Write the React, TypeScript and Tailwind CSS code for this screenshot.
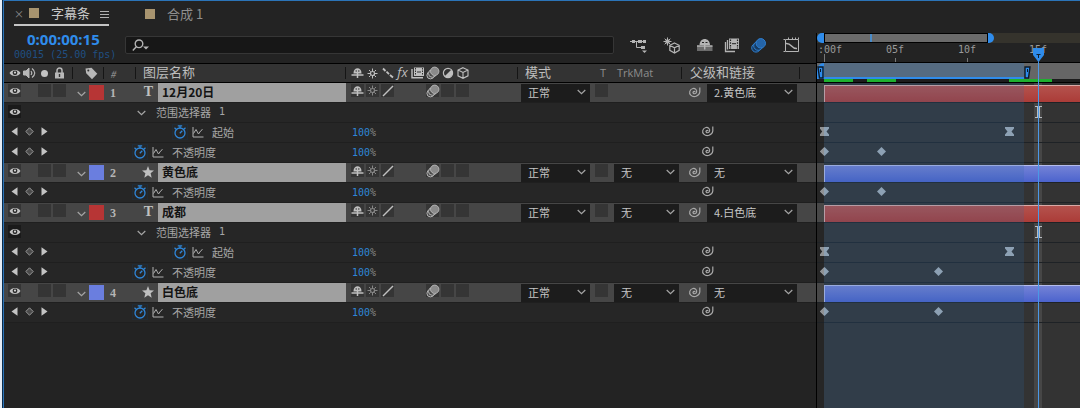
import { Fragment, type ReactNode } from 'react'

type Layer = {
  id: number
  name: string
  kind: 'text' | 'shape'
  matte: boolean
  parent: string
  selectorEnd?: number
  opacityEnd: number
}

const FRAME = 14.25
const WORK_END = 14
const PLAYHEAD = 15

const layers: Layer[] = [
  { id: 1, name: '12月20日', kind: 'text', matte: false, parent: '2.黄色底', selectorEnd: 13, opacityEnd: 4 },
  { id: 2, name: '黄色底', kind: 'shape', matte: true, parent: '无', opacityEnd: 4 },
  { id: 3, name: '成都', kind: 'text', matte: true, parent: '4.白色底', selectorEnd: 13, opacityEnd: 8 },
  { id: 4, name: '白色底', kind: 'shape', matte: true, parent: '无', opacityEnd: 8 },
]

const at = (frame: number) => Math.round(frame * FRAME)

function Eye() {
  return (
    <svg width="12" height="10" viewBox="0 0 12 10">
      <path d="M0.5 5C2.5 1 9.5 1 11.5 5C9.5 9 2.5 9 0.5 5Z" fill="#c4c4c4" />
      <circle cx="6" cy="4.8" r="2.4" fill="#2b2b2b" />
      <circle cx="6" cy="4.6" r="1.1" fill="#d0d0d0" />
    </svg>
  )
}

function Speaker() {
  return (
    <svg width="13" height="12" viewBox="0 0 13 12" fill="none" stroke="#b8b8b8">
      <path d="M0.5 4H3L6 1V11L3 8H0.5Z" fill="#b8b8b8" />
      <path d="M8 4Q9.6 6 8 8M9 1.5Q14.5 6 9 10.5" strokeWidth="1.2" />
    </svg>
  )
}

function Lock() {
  return (
    <svg width="11" height="12" viewBox="0 0 11 12">
      <path d="M3 6V3.5a2.5 2.5 0 0 1 5 0V6" fill="none" stroke="#b8b8b8" strokeWidth="1.5" />
      <path d="M1 5.5H10V11.5H1Z" fill="#b8b8b8" />
      <path d="M5.5 7V10" stroke="#333" strokeWidth="1.4" />
    </svg>
  )
}

function Tag() {
  return (
    <svg width="13" height="13" viewBox="0 0 13 13">
      <path d="M0.5 1.5L6.5 0.8L12.3 6.8L7 12.3L1.2 6.3Z" fill="#b8b8b8" />
      <circle cx="3.3" cy="3.5" r="1" fill="#333" />
    </svg>
  )
}

function Shy() {
  return (
    <svg width="13" height="12" viewBox="0 0 13 12">
      <path d="M2.5 6.5C2.3-0.6 10.7-0.6 10.5 6.5Z" fill="#c0c0c0" />
      <path d="M4.5 4H6M7 4H8.5" stroke="#2c2c2c" strokeWidth="1.2" />
      <path d="M0.5 8H12.5M6.5 6V11" stroke="#c0c0c0" strokeWidth="1.5" />
    </svg>
  )
}

function Sun({ dim }: { dim?: boolean }) {
  return (
    <svg width="13" height="13" viewBox="0 0 13 13" fill="none" stroke={dim ? '#878787' : '#c0c0c0'}>
      <circle cx="6.5" cy="6.5" r="2" strokeWidth="1.2" />
      <path d="M6.5 1.5V4M6.5 9V11.5M1.5 6.5H4M9 6.5H11.5M3 3L4.7 4.7M8.3 8.3L10 10M3 10L4.7 8.3M8.3 4.7L10 3" />
    </svg>
  )
}

function Blur() {
  return (
    <svg width="14" height="14" viewBox="0 0 14 14" stroke="#b4b4b4" fill="#4a4a4a">
      <circle cx="4.5" cy="9.3" r="3.6" />
      <circle cx="6.3" cy="7.5" r="3.8" />
      <circle cx="8.7" cy="5.3" r="4.2" fill="#8a8a8a" />
    </svg>
  )
}

function Spiral() {
  return (
    <svg width="13" height="12" viewBox="0 0 13 12" fill="none" stroke="#a9a9a9" strokeWidth="1.2">
      <path d="M7 6.2C7 5 5.2 5 5 6.3C4.8 8 7.8 8.4 8.5 6.4C9.4 4 7 2 4.9 2.5C1.6 3.3 0.6 7 2.8 9.2C5.5 11.8 11.2 10.5 11.8 6V1.5" />
    </svg>
  )
}

function Chevron() {
  return (
    <svg width="9" height="6" viewBox="0 0 9 6" fill="none" stroke="#a5a5a5" strokeWidth="1.2">
      <path d="M0.7 1L4.5 4.7L8.3 1" />
    </svg>
  )
}

function Stopwatch() {
  return (
    <button aria-label="时间变化秒表" className="flex h-4 w-4 items-center justify-center border border-[#202b35]">
      <svg width="14" height="14" viewBox="0 0 14 14" fill="none" stroke="#2f86d8" strokeWidth="1.3">
        <circle cx="7" cy="8" r="5" />
        <path d="M4.8 0.9H9.2M7 1V3.4M1.5 2.8L3.2 4.2M12.5 2.8L10.8 4.2M6.8 8.3L9.3 5.8" />
      </svg>
    </button>
  )
}

function Graph() {
  return (
    <svg width="12" height="12" viewBox="0 0 12 12" fill="none" stroke="#b0b0b0">
      <path d="M1 1V11H11.5" />
      <path d="M1.5 7.5L4 3.5L6.5 8L9 4.5L10.5 3.5" />
    </svg>
  )
}

function Slot({ children, box }: { children?: ReactNode; box?: boolean }) {
  return (
    <span className={`flex h-[13px] w-[13px] shrink-0 items-center justify-center ${box ? 'bg-[#353535]' : ''}`}>
      {children}
    </span>
  )
}

function Picker({ label, value, options }: { label: string; value: string; options: string[] }) {
  return (
    <label className="relative block h-[18px] bg-[#1c1c1c]">
      <select
        aria-label={label}
        defaultValue={value}
        className="block h-[18px] w-full appearance-none pb-0.5 pl-[7px] text-[11px] leading-4 text-[#c6c6c6] outline-none"
      >
        {options.map((option) => (
          <option key={option}>{option}</option>
        ))}
      </select>
      <span className="pointer-events-none absolute inset-y-0 right-1 flex items-center pb-0.5">
        <Chevron />
      </span>
    </label>
  )
}

function Tabs() {
  return (
    <nav className="flex h-8 items-start gap-8 pl-[10px] text-[13px]">
      <div className="flex h-[25px] items-center border-b-2 border-[#c4c4c4] text-[#c8c8c8]">
        <button aria-label="关闭" className="w-[15px] pt-0.5 text-left text-[10px] text-[#8d8d8d]">
          ×
        </button>
        <span className="h-[10px] w-[10px] bg-[#a8946f]" />
        <button className="pl-3">字幕条</button>
        <button aria-label="面板菜单" className="pt-1 pl-[10px]">
          <svg width="9" height="9" viewBox="0 0 9 9" stroke="#b0b0b0">
            <path d="M0 1.5H9M0 4.5H9M0 7.5H9" />
          </svg>
        </button>
      </div>
      <button className="flex h-[25px] items-center gap-3 pl-1 text-[#8f8f8f]">
        <span className="h-[10px] w-[10px] bg-[#a8946f]" />
        <span>合成 1</span>
      </button>
    </nav>
  )
}

function Toolbar() {
  return (
    <div className="mt-1 flex items-center gap-4 pr-4 pl-4">
      <button aria-label="合成微型流程图">
        <svg width="17" height="17" viewBox="0 0 17 17" fill="none" stroke="#b4b4b4">
          <path d="M0 4.5H8M6.5 4.5V10.5H11M12 4.5H14" />
          <path d="M2 3h3v3h-3zM8 3h4v3h-4zM13 3h3v3h-3zM11 9h4v3h-4z" fill="#b4b4b4" stroke="none" />
          <path d="M12 13.5H17L14.5 16Z" fill="#b4b4b4" stroke="none" />
        </svg>
      </button>
      <button aria-label="草图 3D">
        <svg width="17" height="17" viewBox="0 0 17 17" fill="none" stroke="#b4b4b4">
          <path d="M11.5 6L16.2 8.3V13.3L11.5 16L6.8 13.3V8.3ZM6.8 8.3L11.5 10.8L16.2 8.3M11.5 10.8V16" strokeWidth="1.2" />
          <circle cx="4.5" cy="4.5" r="1.8" fill="#b4b4b4" />
          <path d="M4.5 0.5V8.5M0.5 4.5H8.5M1.7 1.7L7.3 7.3M1.7 7.3L7.3 1.7" />
        </svg>
      </button>
      <div className="flex items-center gap-[10px]">
        <button aria-label="隐藏隐蔽图层">
          <svg width="17" height="17" viewBox="0 0 17 17">
            <path d="M1 9H16.5V14H1Z" fill="#6c6c6c" />
            <path d="M3.5 8C3.8 0 13.7 0 14 8Z" fill="#b4b4b4" />
            <path d="M1 9H16.5M8.7 7V12.5" stroke="#b4b4b4" strokeWidth="1.5" />
            <path d="M6 5.5H8M9.5 5.5H11.5" stroke="#232323" />
          </svg>
        </button>
        <button aria-label="帧混合">
          <svg width="17" height="17" viewBox="0 0 17 17">
            <path d="M2.5 5V14.5H12M4.5 3V12.5" fill="none" stroke="#b4b4b4" strokeWidth="1.3" />
            <path d="M6 1.5H16V12H6Z" fill="#b4b4b4" />
            <path d="M7.5 2.5V11.5M14.5 2.5V11.5" stroke="#232323" strokeWidth="1.2" strokeDasharray="1.5 1.2" />
            <path d="M9 6.7H13" stroke="#232323" />
          </svg>
        </button>
        <button aria-label="运动模糊">
          <svg width="17" height="17" viewBox="0 0 17 17" stroke="#2f7fd0" fill="#173a60">
            <circle cx="6" cy="10.8" r="4.3" />
            <circle cx="8.2" cy="8.8" r="4.5" />
            <circle cx="10.8" cy="6.3" r="4.7" fill="#2464a8" />
          </svg>
        </button>
      </div>
      <button aria-label="图表编辑器">
        <svg width="17" height="17" viewBox="0 0 17 17" fill="none" stroke="#b4b4b4">
          <path d="M2.5 2.5H15.5V14.5H2.5ZM0.5 2.5H2M0.5 14.5H2M5.5 0.5V2M9.5 0.5V2M12.5 0.5V2M15.5 0.5V2" />
          <path d="M3 6.5C9 6 8 12 14 11.5" strokeWidth="1.4" />
        </svg>
      </button>
    </div>
  )
}

function ControlBar() {
  return (
    <div className="flex h-[30px] items-start [&_svg]:block">
      <div className="flex w-[121px] shrink-0 flex-col gap-1 pl-[10px]">
        <button className="pl-[13px] text-left font-['Noto_Sans'] text-[15px] leading-3 font-bold text-[#2f8ceb]">
          0:00:00:15
        </button>
        <span className="font-['DejaVu_Sans_Mono'] text-[10px] leading-[11px] whitespace-nowrap text-[#204f82]">
          00015 (25.00 fps)
        </span>
      </div>
      <label className="mt-[3px] flex h-[18px] flex-1 items-center rounded-xs border border-[#363636] bg-[#171717] pl-1.5">
        <svg width="18" height="13" viewBox="0 0 18 13" fill="none" stroke="#b4b4b4" strokeWidth="1.4">
          <circle cx="7" cy="4.8" r="3.8" />
          <path d="M4.3 7.7L0.8 11.5" />
          <path d="M11 7.5H17L14 10.5Z" fill="#b4b4b4" stroke="none" />
        </svg>
        <input aria-label="搜索" className="h-4 w-0 flex-1 bg-transparent text-[11px] text-[#c6c6c6] outline-none" />
      </label>
      <Toolbar />
    </div>
  )
}

function HeaderCell({ children, divider = true }: { children: ReactNode; divider?: boolean }) {
  return (
    <th className="border-y border-black p-0 text-left font-normal">
      <div className="flex h-[18px] items-center justify-between">
        {children}
        {divider && <span className="h-3 w-px bg-[#151515]" />}
      </div>
    </th>
  )
}

function TableHead() {
  return (
    <thead>
      <tr className="h-5 bg-[#333] text-[13px] text-[#bdbdbd]">
        <HeaderCell>
          <span className="flex items-center gap-0.5 pl-1">
            <Slot><Eye /></Slot>
            <Slot><Speaker /></Slot>
            <Slot><span className="h-[7px] w-[7px] rounded-full bg-[#c4c4c4]" /></Slot>
            <Slot><Lock /></Slot>
          </span>
        </HeaderCell>
        <HeaderCell><span className="pl-3"><Tag /></span></HeaderCell>
        <HeaderCell><span className="pl-1.5 text-[10px] text-[#909090] italic">#</span></HeaderCell>
        <HeaderCell><span className="pb-0.5 pl-[7px]">图层名称</span></HeaderCell>
        <HeaderCell>
          <span className="flex items-center gap-0.5 pl-[5px]">
            <Slot><Shy /></Slot>
            <Slot><Sun /></Slot>
            <Slot>
              <svg width="12" height="12" viewBox="0 0 12 12" stroke="#c0c0c0" strokeWidth="1.8">
                <path d="M1 1.5L3.5 4M4.5 4.7L7 7.2M8 8L11 10.5" />
              </svg>
            </Slot>
            <Slot><span className="font-['Open_Sans'] text-[13px] italic">fx</span></Slot>
            <Slot>
              <svg width="13" height="12" viewBox="0 0 13 12">
                <path d="M1 2V10.8H12" fill="none" stroke="#c0c0c0" strokeWidth="1.4" />
                <path d="M3 0.5H13V9H3Z" fill="#c0c0c0" />
                <path d="M4.5 1V8.5M11.5 1V8.5" stroke="#333" strokeDasharray="1.5 1" />
                <path d="M6 5H10" stroke="#333" />
              </svg>
            </Slot>
            <Slot><Blur /></Slot>
            <Slot>
              <svg width="12" height="12" viewBox="0 0 12 12">
                <circle cx="6" cy="6" r="4.6" fill="none" stroke="#c0c0c0" strokeWidth="1.2" />
                <path d="M9.3 2.7A4.6 4.6 0 1 1 2.7 9.3Z" fill="#c0c0c0" />
              </svg>
            </Slot>
            <Slot>
              <svg width="12" height="12" viewBox="0 0 12 12" fill="none" stroke="#c0c0c0" strokeWidth="1.1">
                <path d="M6 0.7L11 3V8.8L6 11.3L1 8.8V3ZM1 3L6 5.5L11 3M6 5.5V11" />
              </svg>
            </Slot>
          </span>
        </HeaderCell>
        <HeaderCell divider={false}><span className="pb-0.5 pl-[7px]">模式</span></HeaderCell>
        <HeaderCell divider={false}><span className="pl-2 font-['Open_Sans'] text-[11px] text-[#8d8d8d]">T</span></HeaderCell>
        <HeaderCell><span className="pl-[5px] font-['Open_Sans'] text-[11px] text-[#8d8d8d]">TrkMat</span></HeaderCell>
        <th className="border-y border-black p-0 text-left font-normal">
          <div className="flex h-[18px] items-center justify-between pr-4 pl-2">
            <span className="pb-0.5">父级和链接</span>
            <span className="h-3 w-px bg-[#151515]" />
          </div>
        </th>
      </tr>
    </thead>
  )
}

function Row({ children, tone }: { children: ReactNode; tone: string }) {
  return (
    <tr className={`[&>td]:h-5 [&>td]:border-b [&>td]:border-[#1f1f1f] [&>td]:p-0 ${tone}`}>{children}</tr>
  )
}

function LayerRow({ layer }: { layer: Layer }) {
  const isText = layer.kind === 'text'
  return (
    <Row tone="bg-[#464646]">
      <td>
        <div className="flex gap-0.5 pb-1 pl-1">
          <button aria-label="显示"><Slot box><Eye /></Slot></button>
          <Slot />
          <Slot box />
          <Slot box />
        </div>
      </td>
      <td>
        <div className="flex items-center gap-[3px] pl-1">
          <button aria-label="展开" className="pt-0.5"><Chevron /></button>
          <span className={`h-[15px] w-[15px] ${isText ? 'bg-[#b73535]' : 'bg-[#6a7edf]'}`} />
        </div>
      </td>
      <td className="font-['Liberation_Serif'] text-[12px] leading-4 font-bold text-[#b5b5b5]">
        <span className="block pl-1.5">{layer.id}</span>
      </td>
      <td>
        <div className="flex h-[19px] items-center">
          <span className="flex w-[22px] justify-end pr-[5px] pb-0.5 font-['Liberation_Serif'] text-[14px] leading-none font-bold text-[#c0c0c0]">
            {isText ? (
              'T'
            ) : (
              <svg className="-mr-[1px]" width="12" height="12" viewBox="0 0 12 12">
                <path d="M6 0L7.6 4.2L12 4.5L8.6 7.3L9.7 11.7L6 9.2L2.3 11.7L3.4 7.3L0 4.5L4.4 4.2Z" fill="#c0c0c0" />
              </svg>
            )}
          </span>
          <span className="h-[19px] flex-1 bg-[#a0a0a0] pl-1 text-[12px] leading-[18px] font-bold text-[#141414]">
            {layer.name}
          </span>
        </div>
      </td>
      <td>
        <div className="flex gap-0.5 pb-1 pl-[5px]">
          <Slot box><Shy /></Slot>
          <Slot box><Sun dim /></Slot>
          <Slot box>
            <svg width="12" height="12" viewBox="0 0 12 12" stroke="#c0c0c0" strokeWidth="1.4">
              <path d="M1 11L11 1" />
            </svg>
          </Slot>
          <Slot />
          <Slot />
          <Slot box><Blur /></Slot>
          <Slot box />
          <Slot box />
        </div>
      </td>
      <td>
        <div className="pr-0.5 pl-[3px]">
          <Picker label="模式" value="正常" options={['正常', '溶解', '变暗']} />
        </div>
      </td>
      <td>
        <div className="flex pb-1 pl-[3px]"><Slot box /></div>
      </td>
      <td>
        <div className="pr-[3px] pl-0.5">
          {layer.matte && <Picker label="TrkMat" value="无" options={['无', 'Alpha']} />}
        </div>
      </td>
      <td>
        <div className="flex items-center pr-[19px] pl-1.5">
          <button aria-label="父级关联器" className="w-[19px] pb-0.5"><Spiral /></button>
          <div className="flex-1">
            <Picker label="父级和链接" value={layer.parent} options={[layer.parent, ...(layer.parent === '无' ? [] : ['无'])]} />
          </div>
        </div>
      </td>
    </Row>
  )
}

function SelectorRow() {
  return (
    <Row tone="bg-[#262626]">
      <td>
        <div className="flex pb-0.5 pl-1">
          <button aria-label="显示" className="flex h-[13px] w-[13px] items-center justify-center bg-[#1a1a1a]"><Eye /></button>
        </div>
      </td>
      <td colSpan={8}>
        <div className="flex items-center gap-[10px] pb-0.5 pl-16 text-[11px] leading-4 text-[#a6a6a6]">
          <button aria-label="展开" className="pt-0.5"><Chevron /></button>
          <span className="flex gap-2">
            范围选择器 <span className="font-['DejaVu_Sans_Mono'] text-[10px]">1</span>
          </span>
        </div>
      </td>
    </Row>
  )
}

function PropertyRow({ name, nested }: { name: string; nested?: boolean }) {
  return (
    <Row tone="bg-[#262626]">
      <td>
        <div className="flex gap-0.5 pb-0.5 pl-1">
          <button aria-label="上一个关键帧">
            <Slot>
              <svg width="7" height="9" viewBox="0 0 7 9"><path d="M6.5 0.3V8.7L0.5 4.5Z" fill="#c4c4c4" /></svg>
            </Slot>
          </button>
          <button aria-label="添加关键帧">
            <Slot>
              <svg width="9" height="9" viewBox="0 0 9 9"><path d="M4.5 0.8L8.2 4.5L4.5 8.2L0.8 4.5Z" fill="#4b4b4b" stroke="#999" /></svg>
            </Slot>
          </button>
          <button aria-label="下一个关键帧">
            <Slot>
              <svg width="7" height="9" viewBox="0 0 7 9"><path d="M0.5 0.3V8.7L6.5 4.5Z" fill="#c4c4c4" /></svg>
            </Slot>
          </button>
        </div>
      </td>
      <td colSpan={3}>
        <div className={`flex items-center pb-0.5 text-[11px] leading-4 text-[#a6a6a6] ${nested ? 'pl-[99px]' : 'pl-[59px]'}`}>
          <Stopwatch />
          <span className="pr-2 pl-1"><Graph /></span>
          {name}
        </div>
      </td>
      <td className="text-[#8a8a8a]">
        <button className="block pl-1.5 font-['DejaVu_Sans_Mono'] text-[10px] leading-3">
          <span className="text-[#2f86d8]">100</span>%
        </button>
      </td>
      <td colSpan={3} />
      <td>
        <button aria-label="属性关联器" className="block pb-1 pl-[19px]"><Spiral /></button>
      </td>
    </Row>
  )
}

function LayerTable() {
  return (
    <table className="w-px table-fixed border-separate border-spacing-0 [&_svg]:block [&_svg]:shrink-0">
      <colgroup>
        <col className="w-[69px]" />
        <col className="w-[31px]" />
        <col className="w-[32px]" />
        <col className="w-[210px]" />
        <col className="w-[172px]" />
        <col className="w-[74px]" />
        <col className="w-[20px]" />
        <col className="w-[70px]" />
        <col className="w-[134px]" />
      </colgroup>
      <TableHead />
      <tbody>
        {layers.map((layer) => (
          <Fragment key={layer.id}>
            <LayerRow layer={layer} />
            {layer.selectorEnd && <SelectorRow />}
            {layer.selectorEnd && <PropertyRow name="起始" nested />}
            <PropertyRow name="不透明度" />
          </Fragment>
        ))}
      </tbody>
    </table>
  )
}

function Keyframe({ frame, eased }: { frame: number; eased?: boolean }) {
  return (
    <svg className="absolute top-1 -ml-1" style={{ left: at(frame) }} width="9" height="9" viewBox="0 0 9 9" fill="#a5afb8">
      <path d={eased ? 'M0 0H9V1.5L6.5 4.5L9 7.5V9H0V7.5L2.5 4.5L0 1.5Z' : 'M4.5 0L9 4.5L4.5 9L0 4.5Z'} />
      {frame === 0 && (
        <path d={eased ? 'M0 0H4V9H0V7.5L2.5 4.5L0 1.5Z' : 'M4 0.5V8.5L0 4.5Z'} fill="#909294" />
      )}
    </svg>
  )
}

function Track({ children, layer }: { children?: ReactNode; layer?: boolean }) {
  return (
    <div className={`h-5 border-b border-[#1e2226] pl-[7px] ${layer ? 'bg-[linear-gradient(to_right,#484848_7px,transparent_7px)]' : ''}`}>
      <div className="relative h-full">{children}</div>
    </div>
  )
}

function IBeam() {
  return (
    <svg className="absolute top-[3px] -ml-[3px]" style={{ left: at(PLAYHEAD) }} width="7" height="12" viewBox="0 0 7 12" fill="none" stroke="#b8bcc0">
      <path d="M0 0.5H7M0 11.5H7M2.5 1V11M4.5 1V11" />
    </svg>
  )
}

function LayerTracks({ layer }: { layer: Layer }) {
  const tone =
    layer.kind === 'text'
      ? 'border-[#d9a9a6] from-[#b4524d] to-[#ab3c38]'
      : 'border-[#b4bcec] from-[#7482d6] to-[#4c63cd]'
  return (
    <>
      <Track layer>
        <div className="h-full pt-0.5">
          <div className={`h-[17px] border-t border-l bg-linear-to-b ${tone}`} />
        </div>
      </Track>
      {layer.selectorEnd && (
        <>
          <Track><IBeam /></Track>
          <Track>
            <Keyframe frame={0} eased />
            <Keyframe frame={layer.selectorEnd} eased />
          </Track>
        </>
      )}
      <Track>
        <Keyframe frame={0} />
        <Keyframe frame={layer.opacityEnd} />
      </Track>
    </>
  )
}

function Bracket({ flip }: { flip?: boolean }) {
  return (
    <svg width="7" height="13" viewBox="0 0 7 13">
      <path d={flip ? 'M1 1H6V12H2.5Z' : 'M1 1H6L4.5 12H1Z'} fill="#2f8ceb" stroke="#0b1a2a" strokeWidth="1.4" />
      <path d="M3.5 3V6" stroke="#0b1a2a" />
    </svg>
  )
}

function Ruler() {
  return (
    <div className="relative ml-[7px] h-[19px] font-['DejaVu_Sans_Mono'] text-[10px] leading-[14px] text-[#9a9a9a]">
      {[0, 5, 10, 15].map((frame) => (
        <Fragment key={frame}>
          <span className={`absolute top-0 whitespace-nowrap ${frame === 0 ? '-ml-1.5' : '-ml-[9px]'}`} style={{ left: at(frame) }}>
            {frame === 0 ? ':00f' : `${String(frame).padStart(2, '0')}f`}
          </span>
          <span className={`absolute bottom-0 w-px bg-[#777] ${frame === 0 ? 'h-2' : 'h-1'}`} style={{ left: at(frame) }} />
        </Fragment>
      ))}
    </div>
  )
}

function Timeline() {
  const cached = [
    [0, 2],
    [3, 5],
    [13, 16],
  ]
  return (
    <section className="relative flex min-w-0 flex-1 flex-col overflow-hidden border-l border-black">
      <div className="flex h-[10px] bg-[#35332c]">
        <span className="w-[7px] rounded-l-full bg-[#2f8ceb]" />
        <div className="flex w-[164px] border border-black bg-[#6a6a6a]">
          <span className="ml-[45px] w-0.5 bg-[#4b8cc8]" />
        </div>
        <span className="w-[6px] rounded-r-full bg-[#2f8ceb]" />
      </div>
      <Ruler />
      <div className="flex h-[17px] border-t border-black bg-[#666]">
        <span className="w-[7px] rounded-tl-full bg-[#2f8ceb] pt-[3px]"><Bracket flip /></span>
        <span className="h-4 border-b-2 border-[#2f8ceb] bg-[#556b81]" style={{ width: at(WORK_END) }} />
        <span className="pt-[3px]"><Bracket /></span>
      </div>
      <div className="h-1 border-b border-black bg-[#1d1d1d] pl-[7px]">
        <div className="relative h-[3px]">
          {cached.map(([from, to]) => (
            <span key={from} className="absolute inset-y-0 bg-[#1fb02f]" style={{ left: at(from), width: at(to - from) }} />
          ))}
        </div>
      </div>
      <div className="relative flex-1 bg-[linear-gradient(to_right,#262626_7px,#333_7px)]">
        <span className="absolute inset-y-0 ml-[3px] w-2 bg-[#464646]" style={{ left: at(PLAYHEAD) }} />
        <div className="relative">
          {layers.map((layer) => (
            <LayerTracks key={layer.id} layer={layer} />
          ))}
        </div>
        <span className="pointer-events-none absolute inset-y-0 left-[7px] bg-[#2f6ba7]/20" style={{ width: at(WORK_END) }} />
      </div>
      <div className="pointer-events-none absolute top-[15px] bottom-0 ml-px flex w-[13px] flex-col items-center" style={{ left: at(PLAYHEAD) }}>
        <svg className="shrink-0" width="13" height="14" viewBox="0 0 13 14">
          <path d="M1 0H12V7L6.5 14L1 7Z" fill="#2f8ceb" />
          <path d="M4.5 6.5H8.5M6.5 6.5V10" stroke="#123" />
        </svg>
        <span className="w-px flex-1 bg-[#4a98e6]" />
      </div>
    </section>
  )
}

export default function App() {
  return (
    <div className="flex min-h-screen bg-[#232323] font-['Noto_Sans_CJK_SC',sans-serif]">
      <div className="w-0.5 bg-[#e6ecf4]" />
      <div className="w-px bg-[#0c2c4c]" />
      <main className="flex min-w-0 flex-1 flex-col border-t border-l border-[#2b74b8]">
        <Tabs />
        <div className="flex min-w-0 flex-1">
          <section className="shrink-0">
            <ControlBar />
            <LayerTable />
          </section>
          <Timeline />
        </div>
      </main>
    </div>
  )
}
